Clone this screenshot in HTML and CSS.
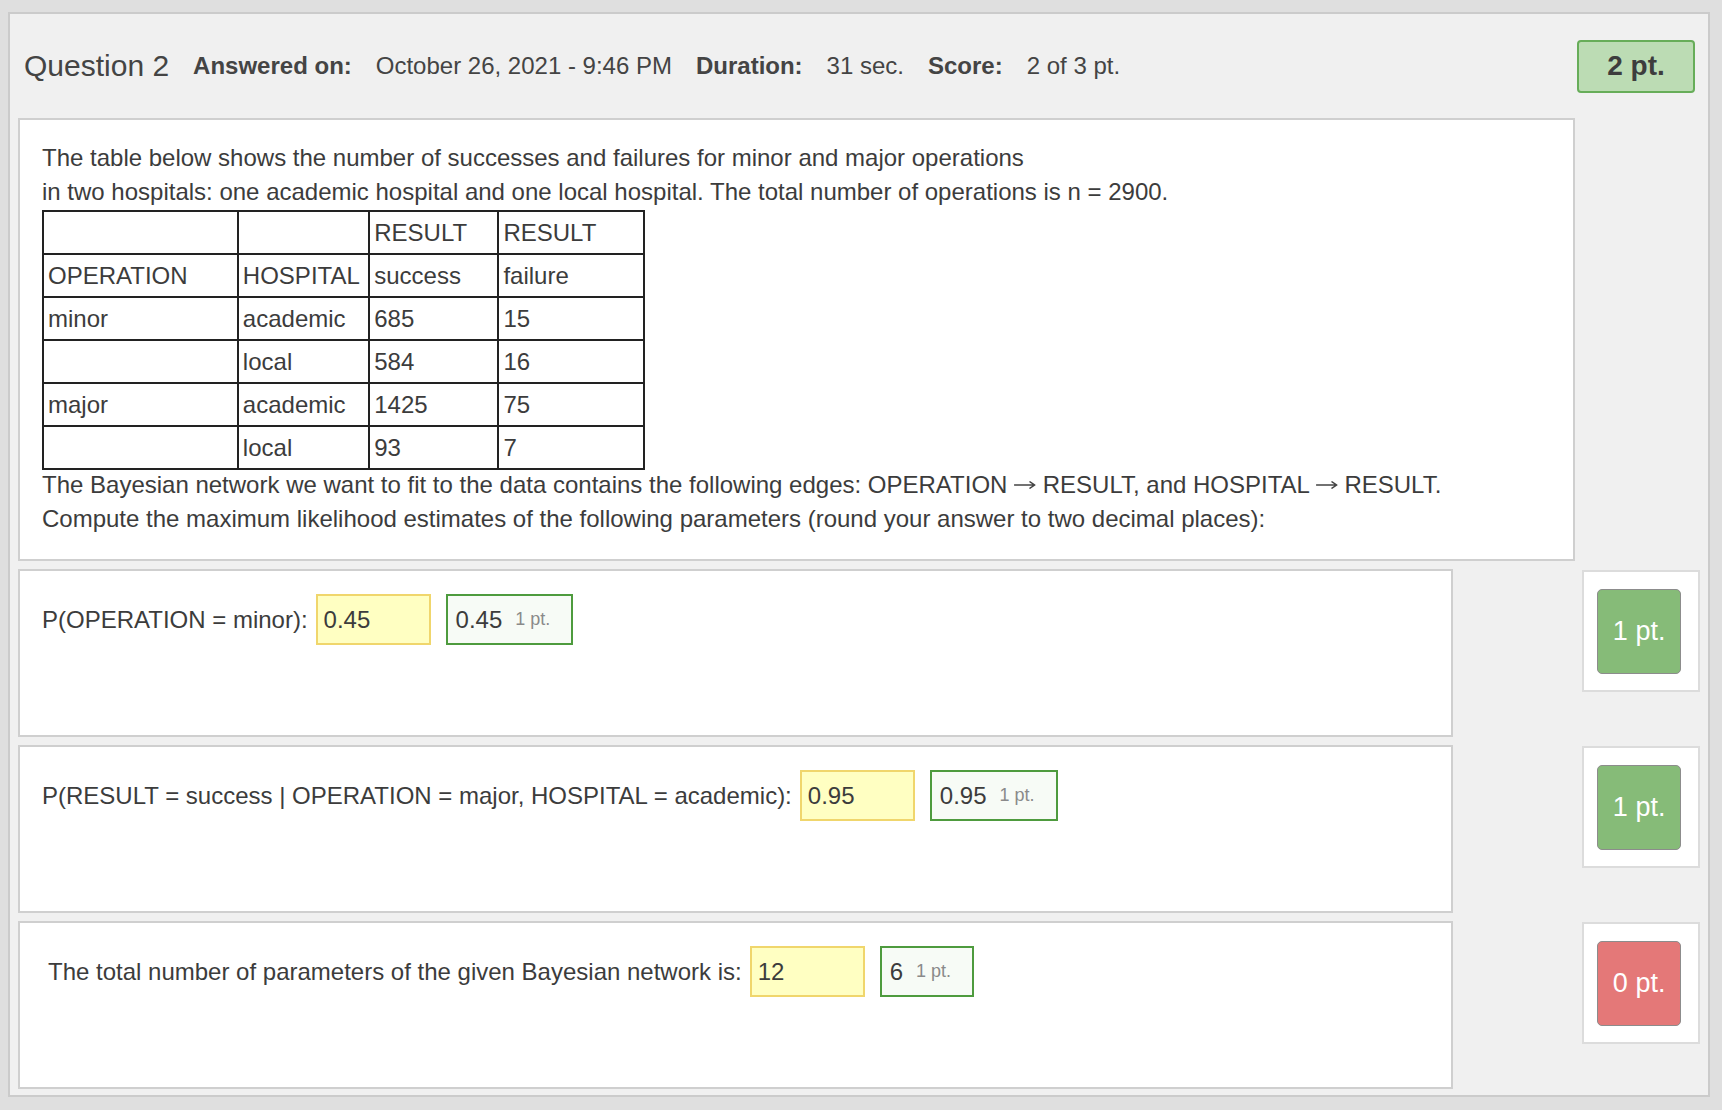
FILE: index.html
```html
<!DOCTYPE html>
<html>
<head>
<meta charset="utf-8">
<link rel="stylesheet" href="styles.css">
</head>
<body>
<div class="panel">
  <div class="header">
    <span class="qtitle">Question 2</span>
    <span class="lbl">Answered on:</span>
    <span class="val">October 26, 2021 - 9:46 PM</span>
    <span class="lbl">Duration:</span>
    <span class="val">31 sec.</span>
    <span class="lbl">Score:</span>
    <span class="val">2 of 3 pt.</span>
    <span class="total">2 pt.</span>
  </div>
  <div class="body">
    <div class="content">
      <p class="txt">The table below shows the number of successes and failures for minor and major operations<br>in two hospitals: one academic hospital and one local hospital. The total number of operations is n = 2900.</p>
      <table class="data">
        <colgroup><col class="c1"><col class="c2"><col class="c3"><col class="c4"></colgroup>
        <tr><td></td><td></td><td>RESULT</td><td>RESULT</td></tr>
        <tr><td>OPERATION</td><td>HOSPITAL</td><td>success</td><td>failure</td></tr>
        <tr><td>minor</td><td>academic</td><td>685</td><td>15</td></tr>
        <tr><td></td><td>local</td><td>584</td><td>16</td></tr>
        <tr><td>major</td><td>academic</td><td>1425</td><td>75</td></tr>
        <tr><td></td><td>local</td><td>93</td><td>7</td></tr>
      </table>
      <p class="txt">The Bayesian network we want to fit to the data contains the following edges: OPERATION <svg class="arrow" viewBox="0 0 22 10" width="22" height="10" aria-label="→"><path d="M0.5 5H20.5M16 1.8L20.8 5L16 8.2" fill="none" stroke="#444" stroke-width="1.5" stroke-linecap="round" stroke-linejoin="round"/></svg> RESULT, and HOSPITAL <svg class="arrow" viewBox="0 0 22 10" width="22" height="10" aria-label="→"><path d="M0.5 5H20.5M16 1.8L20.8 5L16 8.2" fill="none" stroke="#444" stroke-width="1.5" stroke-linecap="round" stroke-linejoin="round"/></svg> RESULT.<br>Compute the maximum likelihood estimates of the following parameters (round your answer to two decimal places):</p>
    </div>

    <div class="row">
      <div class="card">
        <div class="answer">
          <span class="label">P(OPERATION = minor):</span>
          <span class="input">0.45</span>
          <span class="correct">0.45<span class="pts">1 pt.</span></span>
        </div>
      </div>
      <div class="scorebox"><div class="btn good">1 pt.</div></div>
    </div>

    <div class="row">
      <div class="card">
        <div class="answer">
          <span class="label">P(RESULT = success | OPERATION = major, HOSPITAL = academic):</span>
          <span class="input">0.95</span>
          <span class="correct">0.95<span class="pts">1 pt.</span></span>
        </div>
      </div>
      <div class="scorebox"><div class="btn good">1 pt.</div></div>
    </div>

    <div class="row">
      <div class="card">
        <div class="answer indent">
          <span class="label">The total number of parameters of the given Bayesian network is:</span>
          <span class="input">12</span>
          <span class="correct">6<span class="pts">1 pt.</span></span>
        </div>
      </div>
      <div class="scorebox"><div class="btn bad">0 pt.</div></div>
    </div>
  </div>
</div>
</body>
</html>
```
FILE: styles.css
```css
html, body {
  margin: 0;
  padding: 0;
  background: #dfdfdf;
}
body {
  font-family: "Liberation Sans", Arial, Helvetica, sans-serif;
  color: #3c3c3c;
  width: 1722px;
  height: 1110px;
  overflow: hidden;
}
.panel {
  box-sizing: border-box;
  width: 1702px;
  height: 1085px;
  margin: 12px 0 0 8px;
  border: 2px solid #cbcbcb;
  background: #f0f0f0;
}
.header {
  display: flex;
  align-items: center;
  height: 104px;
  padding: 0 13px 0 14px;
  gap: 24px;
  font-size: 24px;
  color: #444;
}
.qtitle {
  font-size: 30px;
}
.lbl {
  font-weight: bold;
}
.total {
  margin-left: auto;
  box-sizing: border-box;
  width: 118px;
  height: 53px;
  display: flex;
  align-items: center;
  justify-content: center;
  background: #bcdcb4;
  border: 2px solid #67ad59;
  border-radius: 4px;
  font-weight: bold;
  font-size: 28px;
  color: #3d3d3d;
}
.body {
  padding: 0 8px;
}
.content {
  box-sizing: border-box;
  width: 1557px;
  height: 443px;
  background: #fff;
  border: 2px solid #cfcfcf;
  padding: 21px 20px 0 22px;
  font-size: 24px;
}
.txt {
  margin: 0;
  line-height: 34px;
}
.arrow {
  vertical-align: 3px;
}
.data {
  border-collapse: collapse;
  table-layout: fixed;
  width: 603px;
  margin: 1px 0 -2px 0;
  font-size: 24px;
}
.data .c1 { width: 178px; }
.data .c2 { width: 120px; }
.data .c3 { width: 118px; }
.data .c4 { width: 133px; }
.data td {
  border: 2px solid #222;
  height: 41px;
  padding: 0 4px;
  vertical-align: middle;
  line-height: 28px;
  white-space: nowrap;
}
.row {
  display: flex;
  align-items: flex-start;
  margin-top: 8px;
}
.card {
  box-sizing: border-box;
  width: 1437px;
  height: 168px;
  background: #fff;
  border: 2px solid #cfcfcf;
  padding: 23px 0 0 22px;
}
.answer {
  display: flex;
  align-items: center;
  font-size: 24px;
}
.answer.indent {
  padding-left: 6px;
}
.input {
  box-sizing: border-box;
  width: 115px;
  height: 51px;
  margin-left: 8px;
  padding-left: 6px;
  display: flex;
  align-items: center;
  background: #ffffc2;
  border: 2px solid #f0d66c;
}
.correct {
  box-sizing: border-box;
  height: 51px;
  margin-left: 15px;
  padding: 0 21px 0 8px;
  display: flex;
  align-items: center;
  background: #f7fbf6;
  border: 2px solid #4e9b3e;
}
.pts {
  font-size: 18px;
  color: #8a8a8a;
  margin-left: 13px;
}
.scorebox {
  box-sizing: border-box;
  width: 118px;
  height: 122px;
  margin-left: 129px;
  margin-top: 1px;
  background: #fff;
  border: 2px solid #dcdcdc;
  padding: 17px 0 0 13px;
}
.btn {
  box-sizing: border-box;
  width: 84px;
  height: 85px;
  border: 1px solid #8c8c8c;
  border-radius: 5px;
  display: flex;
  align-items: center;
  justify-content: center;
  color: #fff;
  font-size: 27px;
}
.btn.good {
  background: #86bb78;
}
.btn.bad {
  background: #e47878;
}
```
